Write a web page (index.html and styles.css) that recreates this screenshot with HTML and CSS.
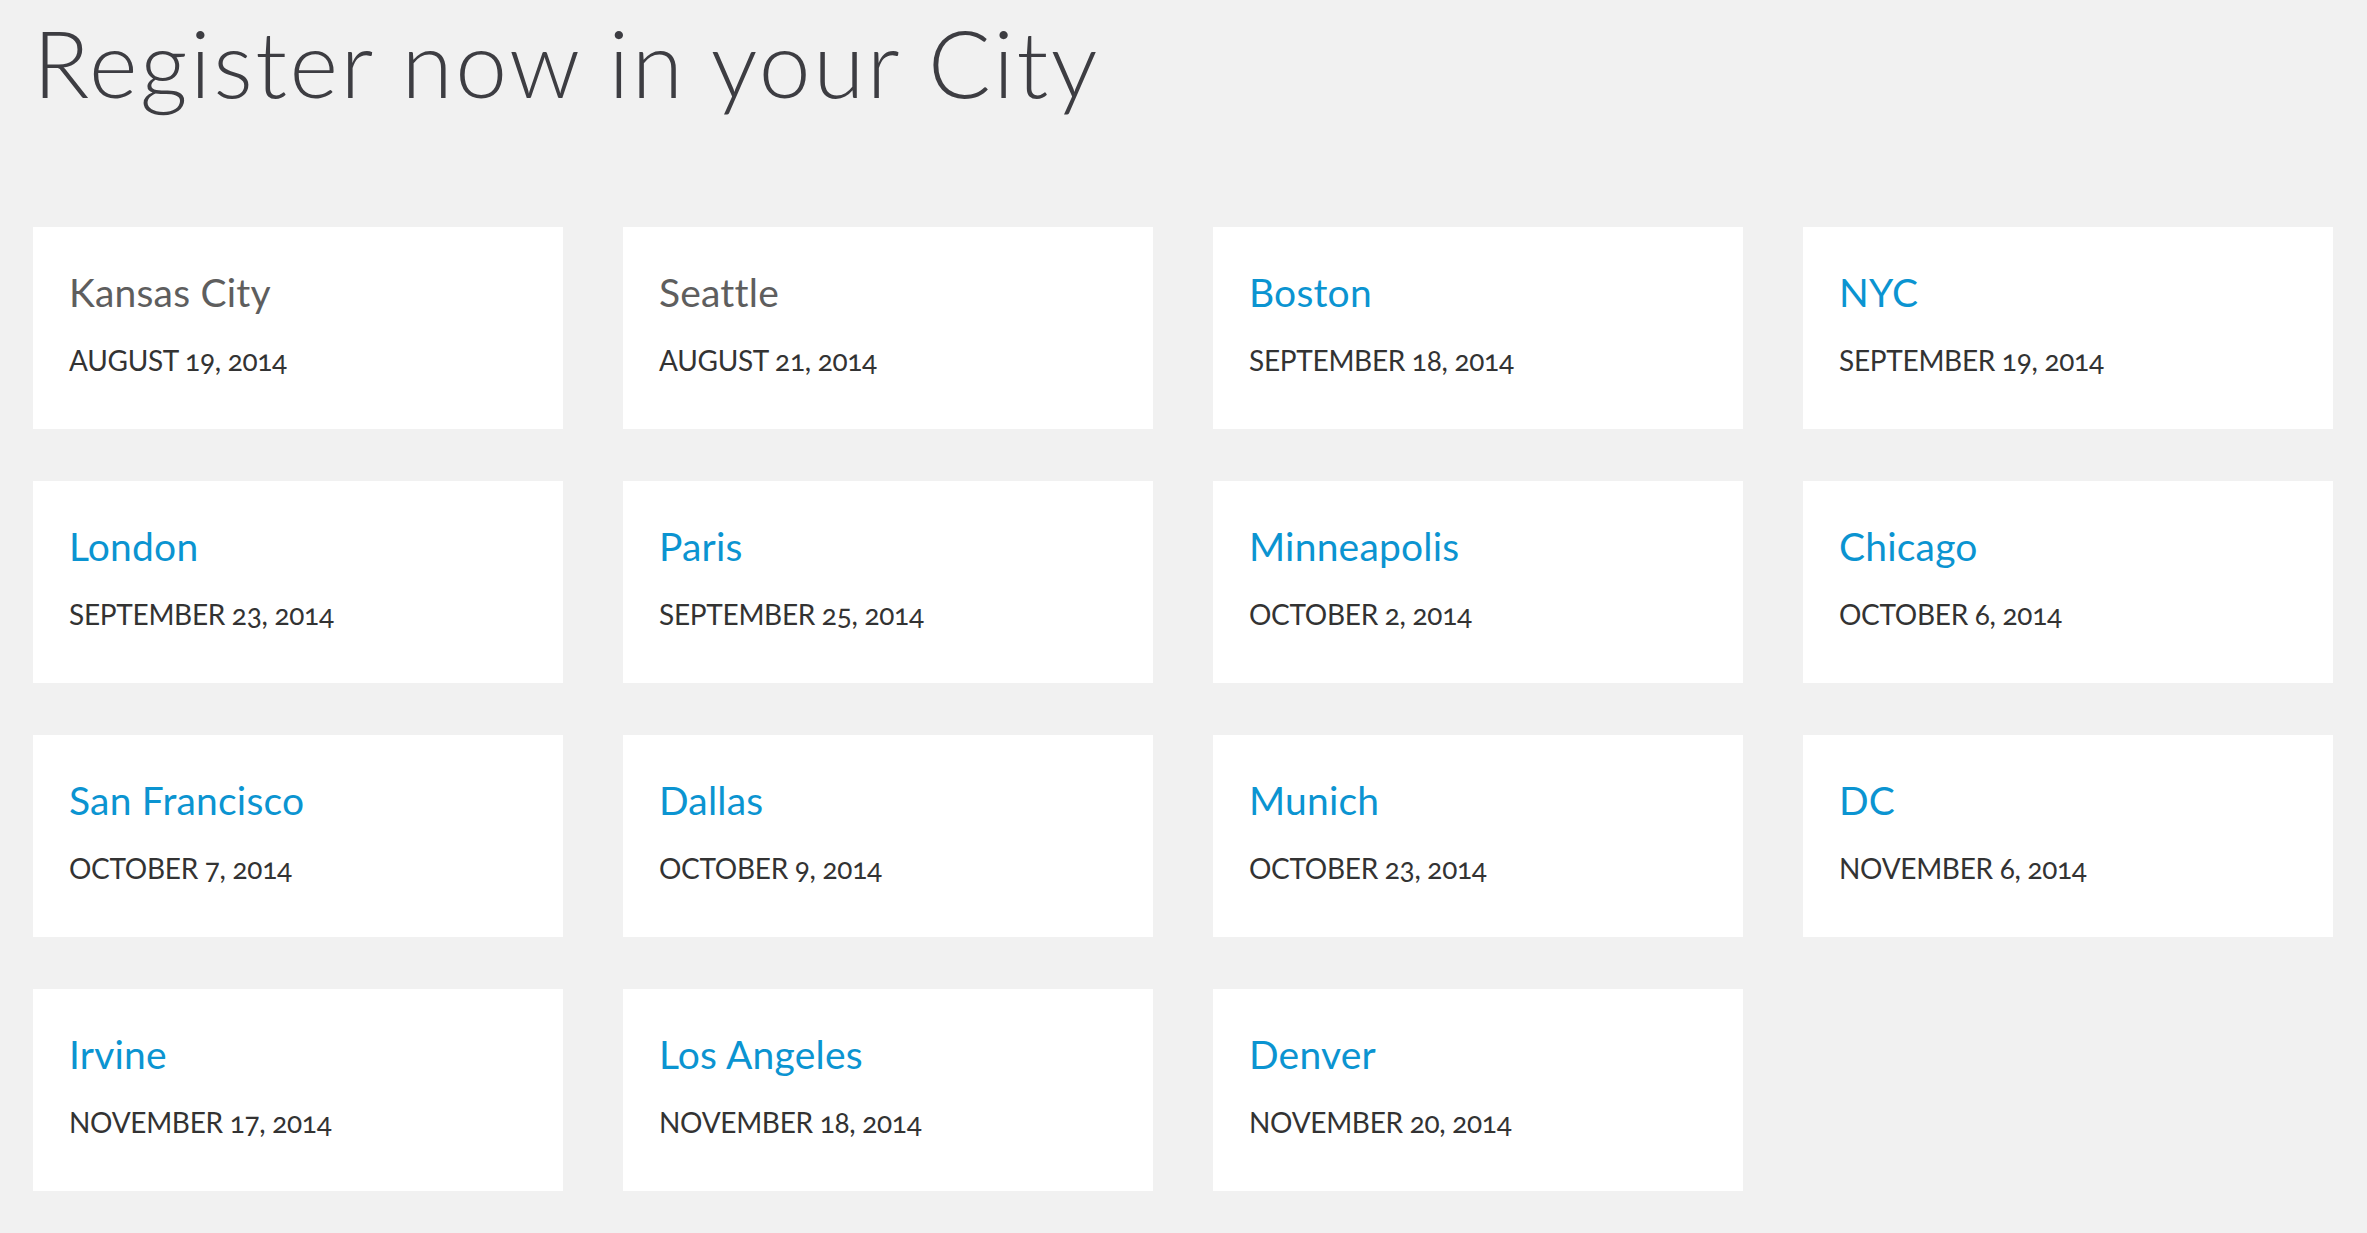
FILE: index.html
```html
<!DOCTYPE html>
<html lang="en">
<head>
<meta charset="utf-8">
<title>Register now in your City</title>
<link rel="stylesheet" href="styles.css">
</head>
<body>
<main class="page">
  <h1 class="title">Register now in your City</h1>
  <section class="grid">
    <a class="card past"><span class="city">Kansas City</span><span class="date">AUGUST 19, 2014</span></a>
    <a class="card past"><span class="city">Seattle</span><span class="date">AUGUST 21, 2014</span></a>
    <a class="card"><span class="city">Boston</span><span class="date">SEPTEMBER 18, 2014</span></a>
    <a class="card"><span class="city">NYC</span><span class="date">SEPTEMBER 19, 2014</span></a>
    <a class="card"><span class="city">London</span><span class="date">SEPTEMBER 23, 2014</span></a>
    <a class="card"><span class="city">Paris</span><span class="date">SEPTEMBER 25, 2014</span></a>
    <a class="card"><span class="city">Minneapolis</span><span class="date">OCTOBER 2, 2014</span></a>
    <a class="card"><span class="city">Chicago</span><span class="date">OCTOBER 6, 2014</span></a>
    <a class="card"><span class="city">San Francisco</span><span class="date">OCTOBER 7, 2014</span></a>
    <a class="card"><span class="city">Dallas</span><span class="date">OCTOBER 9, 2014</span></a>
    <a class="card"><span class="city">Munich</span><span class="date">OCTOBER 23, 2014</span></a>
    <a class="card"><span class="city">DC</span><span class="date">NOVEMBER 6, 2014</span></a>
    <a class="card"><span class="city">Irvine</span><span class="date">NOVEMBER 17, 2014</span></a>
    <a class="card"><span class="city">Los Angeles</span><span class="date">NOVEMBER 18, 2014</span></a>
    <a class="card"><span class="city">Denver</span><span class="date">NOVEMBER 20, 2014</span></a>
  </section>
</main>
</body>
</html>
```
FILE: styles.css
```css
html, body {
  margin: 0;
  padding: 0;
  background: #f1f1f1;
}

.page {
  padding: 0 34px 0 33px;
  font-family: Lato, "Open Sans", "Liberation Sans", sans-serif;
}

.title {
  margin: 6px 0 109px 0;
  font-size: 93px;
  line-height: 112px;
  font-weight: 300;
  color: #3d3d42;
  letter-spacing: 2.5px;
}

.grid {
  display: grid;
  grid-template-columns: repeat(4, 530px);
  grid-auto-rows: 202px;
  column-gap: 60px;
  row-gap: 52px;
}

.card {
  display: flex;
  flex-direction: column;
  background: #ffffff;
  padding: 41px 0 0 36px;
  box-sizing: border-box;
  text-decoration: none;
}

.city {
  font-size: 39px;
  line-height: 48px;
  color: #0b94d1;
  letter-spacing: 0.2px;
}

.past .city {
  color: #5e5e5e;
}

.date {
  margin-top: 27px;
  font-size: 28px;
  line-height: 34px;
  color: #333333;
  letter-spacing: -0.3px;
  font-variant-numeric: oldstyle-nums;
}
```
